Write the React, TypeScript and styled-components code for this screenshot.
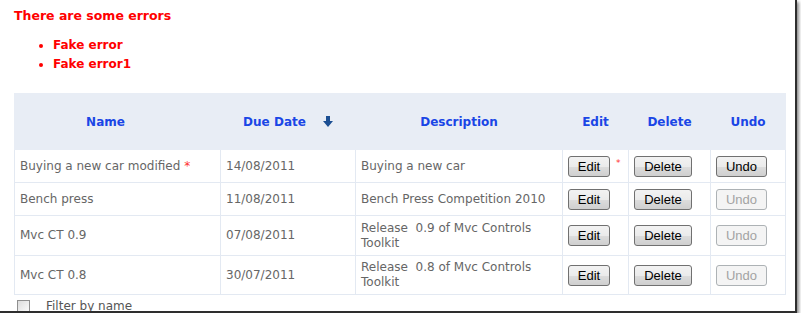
import React from "react";
import styled, { createGlobalStyle } from "styled-components";

const GlobalStyle = createGlobalStyle`
  html, body {
    margin: 0;
    padding: 0;
    background: #ffffff;
  }
`;

const Frame = styled.div`
  box-sizing: border-box;
  width: 797px;
  height: 313px;
  border-right: 2px solid #2e2e2e;
  border-bottom: 2px solid #2e2e2e;
  box-shadow: 2px 2px 3px rgba(0, 0, 0, 0.45);
  overflow: hidden;
  background: #fff;
  padding: 8px 0 0 14px;
  font-family: "DejaVu Sans", Verdana, sans-serif;
`;

const ErrorTitle = styled.div`
  color: #ff0000;
  font-size: 12.5px;
  font-weight: bold;
  line-height: 16px;
`;

const ErrorList = styled.ul`
  margin: 12px 0 0 0;
  padding: 0 0 0 39px;
  color: #ff0000;
  font-size: 12px;
  font-weight: bold;
  list-style: disc;

  li {
    line-height: 19px;
  }
`;

const Grid = styled.table`
  margin-top: 19px;
  width: 771px;
  border-collapse: collapse;
  table-layout: fixed;
  font-size: 12px;
  color: #666666;
`;

const HeadCell = styled.th<{ $padRight?: number }>`
  height: 55px;
  padding: 0 ${(p) => p.$padRight || 0}px 0 0;
  background: #e8edf5;
  color: #1a46e6;
  font-weight: bold;
  text-align: center;
  border: 1px solid #e8edf5;
`;

const SortArrow = styled.svg`
  margin-left: 17px;
  vertical-align: -1px;
`;

const Row = styled.tr<{ $h: number }>`
  height: ${(p) => p.$h}px;
`;

const Cell = styled.td`
  padding: 0 5px;
  border: 1px solid #e3e9f2;
  text-align: left;
  line-height: 15px;
  vertical-align: middle;
`;

const Star = styled.span`
  color: #ff3030;
  margin-left: 4px;
`;

const SmallStar = styled.span`
  color: #ff3030;
  font-size: 9px;
  margin-left: 6px;
  vertical-align: 4px;
`;

const Btn = styled.button<{ $w: number }>`
  box-sizing: border-box;
  width: ${(p) => p.$w}px;
  height: 21px;
  padding: 0;
  vertical-align: middle;
  font-family: "Liberation Sans", Arial, sans-serif;
  font-size: 13px;
  color: #000;
  border: 1px solid #707070;
  border-radius: 3px;
  background: linear-gradient(#f2f2f2 0%, #ebebeb 50%, #dddddd 51%, #cfcfcf 100%);

  &:disabled {
    color: #a3a3a3;
    border-color: #adb2b5;
    background: #f4f4f4;
  }
`;

const FilterRow = styled.div`
  display: flex;
  align-items: center;
  gap: 16px;
  margin: 4px 0 0 3px;
  font-size: 12px;
  color: #555;
`;

const Check = styled.span`
  box-sizing: border-box;
  width: 13px;
  height: 13px;
  border: 1px solid #8f8f8f;
  background: linear-gradient(135deg, #dcdcdc, #fbfbfb);
`;

const widths = [206, 135, 207, 66, 82, 75];

const rows = [
  { name: "Buying a new car modified", star: true, date: "14/08/2011", desc: "Buying a new car", undo: true, h: 33 },
  { name: "Bench press", date: "11/08/2011", desc: "Bench Press Competition 2010", undo: false, h: 33 },
  { name: "Mvc CT 0.9", date: "07/08/2011", desc: "Release\u00a0 0.9 of Mvc Controls Toolkit", undo: false, h: 40 },
  { name: "Mvc CT 0.8", date: "30/07/2011", desc: "Release\u00a0 0.8 of Mvc Controls Toolkit", undo: false, h: 39 },
];

export default function App() {
  return (
    <>
      <GlobalStyle />
      <Frame>
        <ErrorTitle>There are some errors</ErrorTitle>
        <ErrorList>
          <li>Fake error</li>
          <li>Fake error1</li>
        </ErrorList>
        <Grid>
          <colgroup>
            {widths.map((w, i) => (
              <col key={i} style={{ width: w }} />
            ))}
          </colgroup>
          <thead>
            <tr>
              <HeadCell $padRight={24}>Name</HeadCell>
              <HeadCell>
                Due Date
                <SortArrow width="10" height="11" viewBox="0 0 10 11">
                  <path d="M3 0h4v5h3l-5 6-5-6h3z" fill="#1c4f93" />
                </SortArrow>
              </HeadCell>
              <HeadCell>Description</HeadCell>
              <HeadCell>Edit</HeadCell>
              <HeadCell>Delete</HeadCell>
              <HeadCell>Undo</HeadCell>
            </tr>
          </thead>
          <tbody>
            {rows.map((r) => (
              <Row key={r.name} $h={r.h}>
                <Cell>
                  {r.name}
                  {r.star && <Star>*</Star>}
                </Cell>
                <Cell>{r.date}</Cell>
                <Cell>{r.desc}</Cell>
                <Cell>
                  <Btn $w={42}>Edit</Btn>
                  {r.star && <SmallStar>*</SmallStar>}
                </Cell>
                <Cell>
                  <Btn $w={58}>Delete</Btn>
                </Cell>
                <Cell>
                  <Btn $w={51} disabled={!r.undo}>Undo</Btn>
                </Cell>
              </Row>
            ))}
          </tbody>
        </Grid>
        <FilterRow>
          <Check />
          Filter by name
        </FilterRow>
      </Frame>
    </>
  );
}
